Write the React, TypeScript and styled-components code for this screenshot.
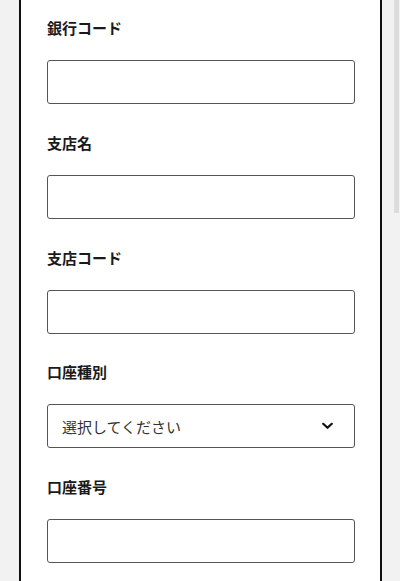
import React from 'react';
import styled, { createGlobalStyle } from 'styled-components';

const GlobalStyle = createGlobalStyle`
  html, body {
    margin: 0;
    padding: 0;
    background-color: #f2f2f2;
    overflow: hidden;
  }
  * {
    box-sizing: border-box;
  }
`;

const Page = styled.div`
  position: relative;
  width: 100vw;
  height: 100vh;
  overflow: hidden;
  background-color: #f2f2f2;
`;

const ScrollThumb = styled.div`
  position: absolute;
  top: 0;
  right: 1px;
  width: 5px;
  height: 213px;
  background-color: #dcdcdc;
`;

const Card = styled.form`
  width: 363px;
  min-height: 1585px;
  margin-left: 19px;
  padding: 17px 25px 40px 26px;
  background-color: #fff;
  border-left: 2px solid #111;
  border-right: 2px solid #111;
  font-family: 'Noto Sans CJK JP', 'Noto Sans', sans-serif;
  color: #1a1a1a;
`;

const Field = styled.div`
  display: flex;
  flex-direction: column;
  margin-bottom: 27.75px;
`;

const Label = styled.label`
  display: block;
  margin-bottom: 21px;
  font-size: 15px;
  line-height: 22px;
  font-weight: 700;
`;

const Input = styled.input`
  width: 100%;
  height: 44px;
  padding: 0 14px;
  border: 1px solid #555;
  border-radius: 3px;
  background-color: #fff;
  font-family: inherit;
  font-size: 15px;
  &:focus {
    outline: none;
  }
`;

const SelectWrap = styled.div`
  position: relative;
  width: 100%;
`;

const Select = styled.select`
  width: 100%;
  height: 44px;
  padding: 0 40px 0 14px;
  border: 1px solid #555;
  border-radius: 3px;
  background-color: #fff;
  appearance: none;
  font-family: inherit;
  font-size: 15px;
  color: #333;
  &:focus {
    outline: none;
  }
`;

const Chevron = styled.svg`
  position: absolute;
  top: 50%;
  right: 22px;
  width: 11px;
  height: 7px;
  transform: translateY(-50%);
  pointer-events: none;
`;

const textFields = ['銀行コード', '支店名', '支店コード'];

const App = () => {
  return (
    <>
      <GlobalStyle />
      <Page>
        <Card>
          {textFields.map(name => (
            <Field key={name}>
              <Label>{name}</Label>
              <Input type="text" />
            </Field>
          ))}
          <Field>
            <Label>口座種別</Label>
            <SelectWrap>
              <Select defaultValue="">
                <option value="">選択してください</option>
                <option value="futsu">普通</option>
                <option value="toza">当座</option>
              </Select>
              <Chevron viewBox="0 0 11 7">
                <polyline
                  points="1.2,1.2 5.5,5.3 9.8,1.2"
                  fill="none"
                  stroke="#111"
                  strokeWidth="2.2"
                  strokeLinecap="round"
                  strokeLinejoin="round"
                />
              </Chevron>
            </SelectWrap>
          </Field>
          <Field>
            <Label>口座番号</Label>
            <Input type="text" />
          </Field>
        </Card>
        <ScrollThumb />
      </Page>
    </>
  );
};

export default App;
